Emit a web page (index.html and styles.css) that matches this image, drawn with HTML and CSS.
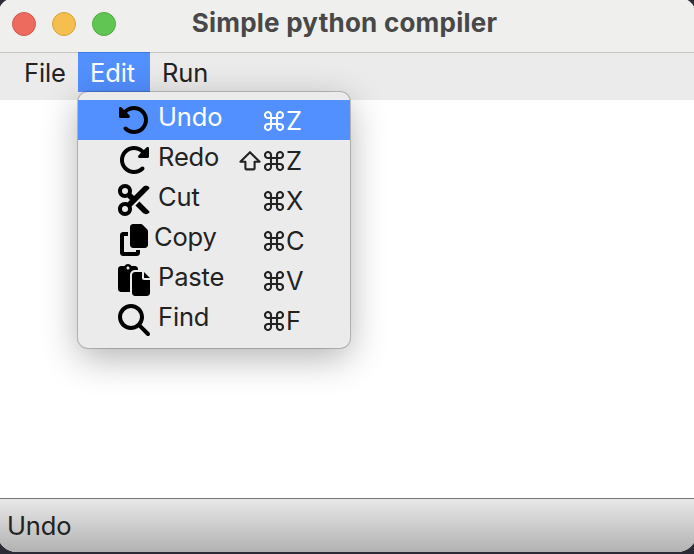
FILE: index.html
```html
<!DOCTYPE html>
<html lang="en">
<head>
<meta charset="utf-8">
<title>Simple python compiler</title>
<link rel="stylesheet" href="styles.css">
</head>
<body>
<svg class="defs" aria-hidden="true">
  <symbol id="undo" viewBox="0 0 512 512"><path d="M48.5 224H40c-13.3 0-24-10.7-24-24V72c0-9.7 5.8-18.5 14.8-22.2s19.3-1.7 26.2 5.2L98.6 96.6c87.6-86.5 228.7-86.2 315.8 1c87.5 87.5 87.5 229.3 0 316.8s-229.3 87.5-316.8 0c-12.5-12.5-12.5-32.8 0-45.3s32.8-12.5 45.3 0c62.5 62.5 163.8 62.5 226.3 0s62.5-163.8 0-226.3c-62.2-62.2-162.7-62.5-225.3-1L185 183c6.9 6.9 8.9 17.2 5.2 26.2s-12.5 14.8-22.2 14.8H48.5z"/></symbol>
  <symbol id="cmd" viewBox="0 0 20 20"><path fill="none" stroke="currentColor" stroke-width="2.1" d="M7 7H4.1A3 3 0 1 1 7 4.1V15.9A3 3 0 1 1 4.1 13H15.9A3 3 0 1 1 13 15.9V4.1A3 3 0 1 1 15.9 7Z"/></symbol>
  <symbol id="shift" viewBox="0 0 22 20"><path fill="none" stroke="currentColor" stroke-width="2.1" stroke-linejoin="round" d="M11 1.2L20.6 10.8H15.6V17.2Q15.6 18.4 14.4 18.4H7.6Q6.4 18.4 6.4 17.2V10.8H1.4Z"/></symbol>
</svg>
<div class="window">
  <header class="titlebar">
    <div class="lights"><i class="light red"></i><i class="light yellow"></i><i class="light green"></i></div>
    <h1 class="title">Simple python compiler</h1>
  </header>
  <nav class="menubar">
    <div class="menu file">File</div>
    <div class="menu edit open">Edit
      <div class="dropdown">
        <div class="item selected">
          <svg class="icon"><use href="#undo"/></svg><span class="label">Undo</span>
          <span class="keys"><svg class="cmd"><use href="#cmd"/></svg><b>Z</b></span>
        </div>
        <div class="item">
          <svg class="icon flip"><use href="#undo"/></svg><span class="label">Redo</span>
          <span class="keys"><svg class="shift"><use href="#shift"/></svg><svg class="cmd"><use href="#cmd"/></svg><b>Z</b></span>
        </div>
        <div class="item">
          <svg class="icon" viewBox="0 0 512 512"><path d="M256 192l-39.5-39.5c4.9-12.6 7.5-26.2 7.5-40.5C224 50.1 173.9 0 112 0S0 50.1 0 112s50.1 112 112 112c14.3 0 27.9-2.7 40.5-7.5L192 256l-39.5 39.5c-12.6-4.9-26.2-7.5-40.5-7.5C50.1 288 0 338.1 0 400s50.1 112 112 112s112-50.1 112-112c0-14.3-2.7-27.9-7.5-40.5L499.2 76.8c7.1-7.1 7.1-18.5 0-25.6c-28.3-28.3-74.1-28.3-102.4 0L256 192zm22.6 150.6L396.8 460.8c28.3 28.3 74.1 28.3 102.4 0c7.1-7.1 7.1-18.5 0-25.6L342.6 278.6l-64 64zM64 112a48 48 0 1 1 96 0 48 48 0 1 1 -96 0zm48 240a48 48 0 1 1 0 96 48 48 0 1 1 0-96z"/></svg><span class="label">Cut</span>
          <span class="keys"><svg class="cmd"><use href="#cmd"/></svg><b>X</b></span>
        </div>
        <div class="item copy">
          <svg class="icon" viewBox="0 0 448 512"><path d="M208 0H332.1c12.7 0 24.9 5.1 33.9 14.1l67.9 67.9c9 9 14.1 21.2 14.1 33.9V336c0 26.5-21.5 48-48 48H208c-26.5 0-48-21.5-48-48V48c0-26.5 21.5-48 48-48zM48 128h80v64H64V448H256V416h64v48c0 26.5-21.5 48-48 48H48c-26.5 0-48-21.5-48-48V176c0-26.5 21.5-48 48-48z"/></svg><span class="label">Copy</span>
          <span class="keys"><svg class="cmd"><use href="#cmd"/></svg><b>C</b></span>
        </div>
        <div class="item">
          <svg class="icon" viewBox="0 0 512 512"><path d="M320 96V80C320 53.49 298.5 32 272 32H215.4C204.3 12.89 183.6 0 160 0S115.7 12.89 104.6 32H48C21.49 32 0 53.49 0 80v320C0 426.5 21.49 448 48 448l144 .0013L192 176C192 131.8 227.8 96 272 96H320zM160 88C146.8 88 136 77.25 136 64S146.8 40 160 40S184 50.75 184 64S173.3 88 160 88zM416 128v96h96L416 128zM384 224L384 128h-112C245.5 128 224 149.5 224 176v288c0 26.51 21.49 48 48 48h192c26.51 0 48-21.49 48-48V256h-96C398.3 256 384 241.7 384 224z"/></svg><span class="label">Paste</span>
          <span class="keys"><svg class="cmd"><use href="#cmd"/></svg><b>V</b></span>
        </div>
        <div class="item">
          <svg class="icon" viewBox="0 0 512 512"><path d="M416 208c0 45.9-14.9 88.3-40 122.7L502.6 457.4c12.5 12.5 12.5 32.8 0 45.3s-32.8 12.5-45.3 0L330.7 376c-34.4 25.2-76.8 40-122.7 40C93.1 416 0 322.9 0 208S93.1 0 208 0S416 93.1 416 208zM208 352a144 144 0 1 0 0-288 144 144 0 1 0 0 288z"/></svg><span class="label">Find</span>
          <span class="keys"><svg class="cmd"><use href="#cmd"/></svg><b>F</b></span>
        </div>
      </div>
    </div>
    <div class="menu run">Run</div>
  </nav>
  <main class="editor"></main>
  <footer class="status">Undo</footer>
</div>
</body>
</html>
```
FILE: styles.css
```css
* { box-sizing: border-box; }
html, body { height: 100%; }
body {
  margin: 0;
  overflow: hidden;
  background: #2b2b35;
  font-family: Inter, "Liberation Sans", sans-serif;
  font-size: 25.5px;
  letter-spacing: -0.15px;
  color: #222;
}
.defs { display: none; }
.window {
  display: flex;
  flex-direction: column;
  width: 700px;
  height: 555px;
  margin: -3px 0 0 -3px;
  padding: 3px 3px 0;
  border-radius: 20px;
  overflow: hidden;
  background: #efefed;
}
.titlebar {
  display: grid;
  grid-template-columns: 128px 1fr 133px;
  flex: none;
  height: 53px;
  margin: 0 -3px;
  padding: 0 3px;
  border-bottom: 1px solid #c5c5c1;
}
.lights { display: flex; gap: 16px; padding: 12px 0 0 12px; }
.light { width: 24px; height: 24px; border-radius: 50%; border: 1px solid; }
.red { background: #ec6a5e; border-color: #d3574d; }
.yellow { background: #f4bf4f; border-color: #d8a23d; }
.green { background: #61c554; border-color: #50a944; }
.title {
  margin: 0;
  font-size: 26px;
  line-height: 46px;
  font-weight: 700;
  letter-spacing: 0.23px;
  text-align: center;
  white-space: nowrap;
  color: #484848;
}
.menubar {
  display: flex;
  flex: none;
  height: 47px;
  margin: 0 -3px;
  padding-left: 15px;
  background: #ebebeb;
}
.menu { height: 39px; padding-left: 12px; line-height: 39px; }
.file { width: 66px; }
.edit { width: 72px; position: relative; }
.run { width: 72px; }
.open { background: #528fff; color: #fff; box-shadow: 0 -1px #3c79e4; }
.dropdown {
  position: absolute;
  z-index: 2;
  top: 39px;
  left: 0;
  width: 272px;
  height: 256px;
  padding: 8px 0;
  border-radius: 10px;
  background: #ebebeb;
  color: #222;
  box-shadow: 0 0 0 1px rgba(0,0,0,.2), 0 10px 36px rgba(0,0,0,.3);
}
.item { display: flex; height: 40px; padding: 0 48px 0 40px; }
.selected { background: #528fff; color: #fff; }
.icon { flex: none; width: 32px; height: 32px; margin-top: 4px; color: #000; fill: #000; }
.flip { transform: scaleX(-1); }
.label { margin-left: 8px; line-height: 34px; }
.copy .icon { width: 28px; margin-left: 2px; }
.copy .label { margin-left: 6px; }
.keys { display: flex; align-items: flex-start; margin-left: auto; line-height: 41px; }
.keys b { width: 16px; font-weight: 400; margin-left: 2px; }
.cmd { width: 20px; height: 20px; margin-top: 11px; }
.shift { width: 22px; height: 20px; margin: 11px 3px 0 0; }
.editor { flex: 1; margin: 0 -3px; background: #fff; }
.status {
  flex: none;
  height: 54px;
  margin: 0 -3px;
  padding-left: 10px;
  border-top: 1px solid #747474;
  line-height: 53px;
  background: linear-gradient(#e8e8e8, #b2b2b2);
}
```
